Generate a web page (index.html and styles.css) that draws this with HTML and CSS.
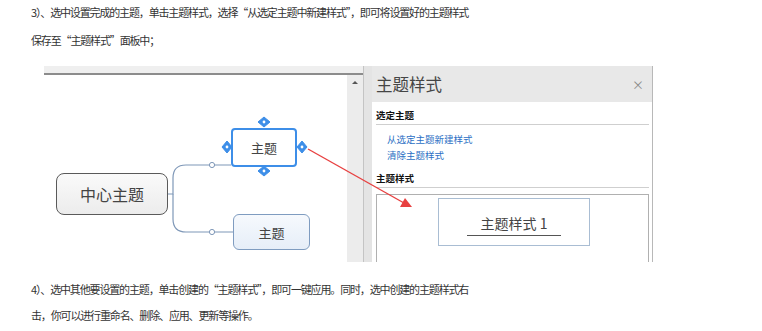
FILE: index.html
```html
<!DOCTYPE html>
<html lang="zh-CN">
<head>
    <meta charset="UTF-8">
    <title>主题样式</title>
    <link rel="stylesheet" href="styles.css">
</head>
<body>
    <div class="article">
        <p class="step first">3）、选中设置完成的主题，单击主题样式，选择“从选定主题中新建样式”，即可将设置好的主题样式<br>保存至“主题样式”面板中；</p>

        <div class="shot">
            <div class="canvas-col">
                <div class="toolbar-edge"></div>
                <div class="canvas-row">
                    <div class="canvas">
                        <div class="topic central">中心主题</div>
                        <div class="topic selected">主题</div>
                        <div class="topic sub">主题</div>
                    </div>
                    <div class="vscroll"><span class="arrow-up"></span></div>
                </div>
            </div>
            <div class="splitter"></div>
            <div class="panel">
                <div class="panel-head">
                    <span class="panel-title">主题样式</span>
                    <span class="panel-close">×</span>
                </div>
                <div class="panel-body">
                    <div class="section-title">选定主题</div>
                    <a href="#" class="panel-link">从选定主题新建样式</a>
                    <a href="#" class="panel-link">清除主题样式</a>
                    <div class="section-title second">主题样式</div>
                    <div class="gallery">
                        <div class="style-tile"><span>主题样式 1</span></div>
                    </div>
                </div>
            </div>

            <!-- connectors, handles and the red arrow drawn over the screenshot -->
            <svg class="overlay" width="611" height="196" viewBox="0 0 611 196">
                <g fill="none" stroke="#7f98b8" stroke-width="1.2">
                    <path d="M124 128 H129 V112 Q129 99 142 99 H187"/>
                    <path d="M129 128 V153 Q129 166 142 166 H189"/>
                </g>
                <circle cx="168" cy="99" r="2.6" fill="#fff" stroke="#7f98b8" stroke-width="1"/>
                <circle cx="168" cy="166" r="2.6" fill="#fff" stroke="#7f98b8" stroke-width="1"/>
                <g fill="#3d8ee8" stroke="#3d8ee8" stroke-width="1" stroke-linejoin="round">
                    <polygon points="220,51 226,56 220,61 214,56"/>
                    <polygon points="220,100 226,105 220,110 214,105"/>
                    <polygon points="183,75 188,81 183,87 178,81"/>
                    <polygon points="258,75 263,81 258,87 253,81"/>
                </g>
                <g fill="#fff">
                    <circle cx="220" cy="56" r="1.4"/>
                    <circle cx="220" cy="105" r="1.4"/>
                    <circle cx="183" cy="81" r="1.4"/>
                    <circle cx="258" cy="81" r="1.4"/>
                </g>
                <line x1="264" y1="83" x2="360" y2="137" stroke="#e84040" stroke-width="1.4"/>
                <polygon points="368,141 356,141 361,132" fill="#e84040"/>
            </svg>
        </div>

        <p class="step second">4）、选中其他要设置的主题，单击创建的“主题样式”，即可一键应用。同时，选中创建的主题样式右<br>击，你可以进行重命名、删除、应用、更新等操作。</p>
    </div>
</body>
</html>
```

FILE: styles.css
```css
body {
    margin: 0;
    padding: 0;
    background: #ffffff;
    font-family: "Noto Sans CJK SC", "Liberation Sans", sans-serif;
    color: #333333;
}
.article {
    padding-left: 31px;
}
.step {
    font-size: 11px;
    letter-spacing: -1.15px;
    margin: 0;
}
.step.first {
    line-height: 28px;
    margin-top: -2px;
}
.step.second {
    line-height: 26px;
    margin-top: 14px;
}

/* screenshot */
.shot {
    position: relative;
    display: flex;
    width: 611px;
    height: 196px;
    margin: 12px 0 0 13px;
    background: #ffffff;
}
.canvas-col {
    width: 319px;
    display: flex;
    flex-direction: column;
}
.toolbar-edge {
    height: 7px;
    background: #efefef;
    border-bottom: 2px solid #8c8c8c;
}
.canvas-row {
    flex: 1;
    display: flex;
}
.canvas {
    position: relative;
    width: 303px;
    background: #ffffff;
}
.vscroll {
    width: 16px;
    background: #ececec;
    display: flex;
    justify-content: center;
    padding-top: 6px;
    box-sizing: border-box;
}
.arrow-up {
    width: 0;
    height: 0;
    border-left: 3px solid transparent;
    border-right: 3px solid transparent;
    border-bottom: 3px solid #555;
}
.splitter {
    width: 8px;
    background: #e4e4e4;
    border-left: 1px solid #c4c4c4;
}

.topic {
    position: absolute;
    display: flex;
    align-items: center;
    justify-content: center;
    box-sizing: border-box;
    color: #444;
}
.topic.central {
    left: 12px;
    top: 98px;
    width: 112px;
    height: 42px;
    font-size: 16px;
    border: 1px solid #5a5a5a;
    border-radius: 8px;
    background: linear-gradient(#fafafa, #ececec);
}
.topic.selected {
    left: 187px;
    top: 53px;
    width: 66px;
    height: 39px;
    font-size: 13px;
    border: 2px solid #3d8ee8;
    border-radius: 4px;
    background: #ffffff;
}
.topic.sub {
    left: 189px;
    top: 139px;
    width: 77px;
    height: 36px;
    font-size: 13px;
    border: 1px solid #7f9cc0;
    border-radius: 6px;
    background: linear-gradient(#f6f9fd, #e6eef8);
}

/* right panel */
.panel {
    width: 280px;
    display: flex;
    flex-direction: column;
    border-right: 1px solid #b8b8b8;
}
.panel-head {
    height: 36px;
    background: #e8e8e8;
    display: flex;
    align-items: center;
    justify-content: space-between;
    padding: 0 8px 0 4px;
}
.panel-title {
    font-size: 16.5px;
    color: #454545;
}
.panel-close {
    font-size: 12px;
    color: #8a8a8a;
}
.panel-body {
    flex: 1;
    padding: 6px 3px 0 4px;
    overflow: hidden;
}
.section-title {
    font-size: 9.5px;
    font-weight: bold;
    color: #111;
    line-height: 14px;
    padding-bottom: 2px;
    border-bottom: 1px solid #cfcfcf;
    margin-bottom: 6px;
}
.section-title.second {
    margin-top: 8px;
}
.panel-link {
    display: block;
    padding-left: 11px;
    font-size: 9.5px;
    line-height: 16px;
    color: #2b6fc4;
    text-decoration: none;
}
.gallery {
    height: 80px;
    border: 1px solid #b0b0b0;
    border-bottom: none;
    display: flex;
    justify-content: center;
    padding-top: 3px;
}
.style-tile {
    width: 152px;
    height: 48px;
    margin-left: 3px;
    box-sizing: border-box;
    border: 1px solid #a9bdd3;
    display: flex;
    align-items: center;
    justify-content: center;
}
.style-tile span {
    font-size: 14px;
    color: #444;
    padding: 0 14px 2px;
    border-bottom: 1px solid #555;
    margin-top: 4px;
}

.overlay {
    position: absolute;
    left: 0;
    top: 0;
    pointer-events: none;
}
```
